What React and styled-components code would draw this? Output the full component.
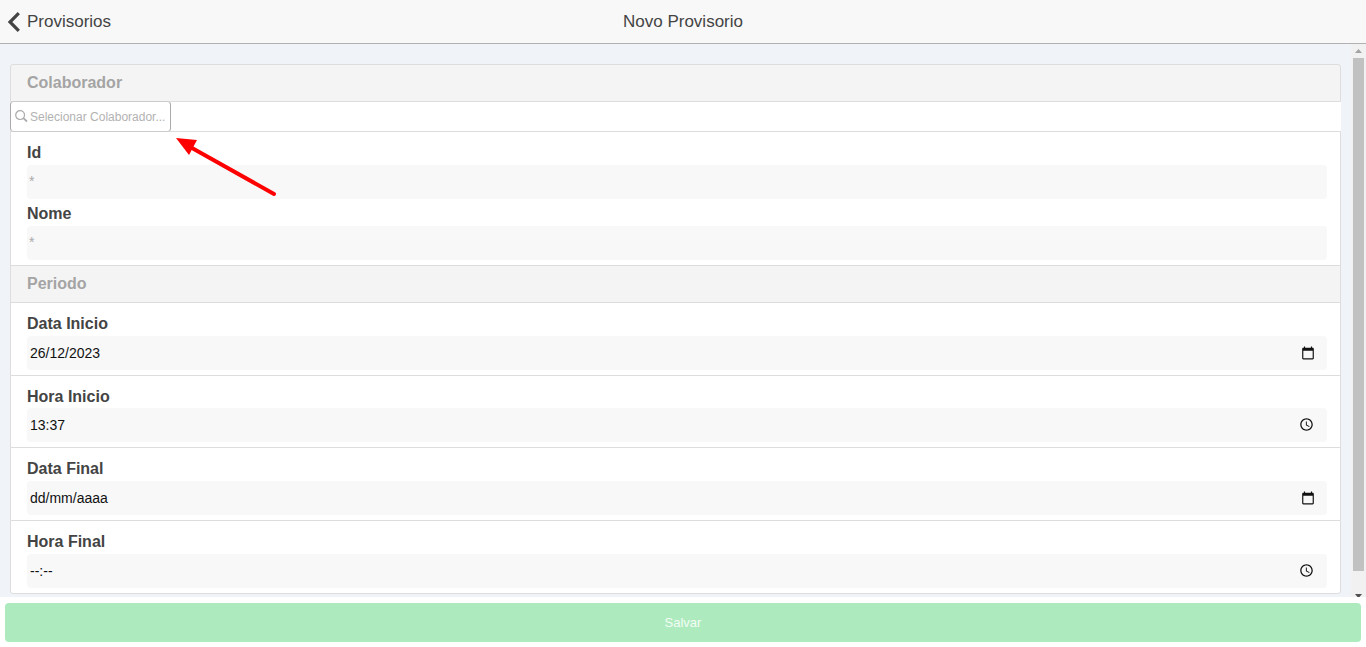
import React, { useState } from 'react';
import styled, { createGlobalStyle } from 'styled-components';

const GlobalStyle = createGlobalStyle`
  * {
    box-sizing: border-box;
  }

  body {
    margin: 0;
    color: #444;
    background-color: #fff;
    font-family: "Liberation Sans", Arial, sans-serif;
    font-size: 16px;
  }

  button,
  input {
    font-family: inherit;
  }
`;

const Page = styled.div`
  display: flex;
  flex-direction: column;
  height: 100vh;
`;

const Header = styled.header`
  display: grid;
  grid-template-columns: 1fr auto 1fr;
  align-items: center;
  flex: none;
  height: 44px;
  padding: 0 8px;
  background-color: #f8f8f8;
  border-bottom: 1px solid #b2b2b2;
`;

const BackLink = styled.a`
  display: flex;
  align-items: center;
  gap: 6px;
  color: #444;
  font-size: 17px;
  line-height: 20px;
  text-decoration: none;
`;

const Title = styled.h1`
  margin: 0;
  color: #444;
  font-size: 17px;
  font-weight: 400;
  line-height: 20px;
`;

const Body = styled.div`
  display: flex;
  flex: 1;
  min-height: 0;
  overflow: hidden;
  background-color: #f0f4f8;
`;

const Form = styled.form`
  flex: 1;
  padding: 20px 10px 0;
`;

const SectionTitle = styled.h2`
  margin: 0;
  padding: 8px 16px;
  color: #a4a4a4;
  background-color: #f4f4f4;
  border: 1px solid #ddd;
  border-radius: ${({ $first }) => ($first ? '3px 3px 0 0' : '0')};
  font-size: 16px;
  font-weight: 700;
  line-height: 20px;
`;

const PickerRow = styled.div`
  position: relative;
  display: flex;
  background-color: #fff;
`;

const PickerButton = styled.button`
  position: relative;
  display: flex;
  align-items: center;
  gap: 2px;
  height: 31px;
  margin: -1px 0;
  padding: 0 5px 0 4px;
  color: #b2b2b2;
  background-color: #fff;
  border: 1px solid;
  border-color: #ccc #aaa;
  border-radius: 4px;
  font-size: 12px;
`;

const Arrow = styled.svg`
  position: absolute;
  top: 32px;
  left: 164px;
  pointer-events: none;
`;

const Group = styled.div`
  padding: 11px 13px 5px 16px;
  background-color: #fff;
  border: 1px solid #ddd;
  border-bottom-width: ${({ $last }) => ($last ? '1px' : '0')};
  border-radius: ${({ $last }) => ($last ? '0 0 3px 3px' : '0')};

  h2 + & {
    border-top-width: 0;
  }
`;

const Field = styled.div`
  & + & {
    margin-top: 5px;
  }
`;

const Label = styled.label`
  display: block;
  height: ${({ $compact }) => ($compact ? '21px' : '22px')};
  color: #444;
  font-weight: 700;
  line-height: 20px;
`;

const InputBox = styled.div`
  display: flex;
  align-items: center;
  height: 34px;
  padding-right: ${({ $time }) => ($time ? '13px' : '12px')};
  background-color: #f8f8f8;
  border-radius: 4px;
`;

const Input = styled.input`
  flex: 1;
  min-width: 0;
  height: 34px;
  padding: 0 0 1px 3px;
  color: #111;
  background: transparent;
  border: 0;
  outline: 0;
  font-size: 14px;

  &::placeholder {
    color: #111;
    opacity: 1;
  }

  &:read-only {
    padding: 0 0 3px 2px;
  }

  &:read-only::placeholder {
    color: #aaa;
  }
`;

const IconButton = styled.button`
  display: flex;
  padding: 0 0 1px;
  color: #111;
  background: none;
  border: 0;
`;

const Scrollbar = styled.div`
  display: flex;
  flex-direction: column;
  align-items: center;
  flex: none;
  width: 15px;
  background-color: #f1f1f1;
`;

const ScrollArrow = styled.svg`
  flex: none;
  display: block;
`;

const Thumb = styled.div`
  flex: 1;
  width: 11px;
  margin-bottom: 23px;
  background-color: #c1c1c1;
`;

const Footer = styled.footer`
  flex: none;
  padding: 6px 5px 5px;
  background-color: #fff;
`;

const SaveButton = styled.button`
  display: block;
  width: 100%;
  height: 39px;
  padding: 0;
  color: #f3fcf5;
  background-color: #adebbe;
  border: 0;
  border-radius: 4px;
  font-size: 13px;
`;

const ChevronIcon = () => (
  <svg width="13" height="20" viewBox="0 0 13 20" fill="none" aria-hidden="true">
    <path d="M10.8 1.2 2 10l8.8 8.8" stroke="#444" strokeWidth="3.2" />
  </svg>
);

const SearchIcon = () => (
  <svg width="13" height="13" viewBox="0 0 13 13" fill="none" stroke="#aaa" aria-hidden="true">
    <circle cx="5.1" cy="5.1" r="4.4" strokeWidth="1.2" />
    <path d="m8.4 8.2 3.600 3.300" strokeWidth="1.7" />
  </svg>
);

const CalendarIcon = () => (
  <svg width="14" height="14" viewBox="0 0 24 24" fill="currentColor" aria-hidden="true">
    <path d="M20 3h-1V1h-2v2H7V1H5v2H4c-1.100 0-2 .9-2 2v16c0 1.100.9 2 2 2h16c1.100 0 2-.9 2-2V5c0-1.100-.9-2-2-2zm0 18H4V8h16v13z" />
  </svg>
);

const ClockIcon = () => (
  <svg width="15" height="15" viewBox="0 0 24 24" fill="currentColor" aria-hidden="true">
    <path d="M12 2C6.500 2 2 6.500 2 12s4.500 10 10 10 10-4.500 10-10S17.500 2 12 2zm0 18c-4.400 0-8-3.600-8-8s3.600-8 8-8 8 3.600 8 8-3.600 8-8 8zm.5-13H11v6l5.200 3.100.8-1.200-4.500-2.700V7z" />
  </svg>
);

const periodFields = [
  { id: 'dataInicio', label: 'Data Inicio', placeholder: 'dd/mm/aaaa' },
  { id: 'horaInicio', label: 'Hora Inicio', placeholder: '--:--', time: true, compact: true },
  { id: 'dataFinal', label: 'Data Final', placeholder: 'dd/mm/aaaa' },
  { id: 'horaFinal', label: 'Hora Final', placeholder: '--:--', time: true },
];

const App = () => {
  const [values, setValues] = useState({
    dataInicio: '26/12/2023',
    horaInicio: '13:37',
    dataFinal: '',
    horaFinal: '',
  });

  const handleChange = (e) => {
    setValues({ ...values, [e.target.id]: e.target.value });
  };

  return (
    <Page>
      <GlobalStyle />
      <Header>
        <BackLink href="#provisorios">
          <ChevronIcon />
          Provisorios
        </BackLink>
        <Title>Novo Provisorio</Title>
      </Header>
      <Body>
        <Form id="provisorio" onSubmit={(e) => e.preventDefault()}>
          <SectionTitle $first>Colaborador</SectionTitle>
          <PickerRow>
            <PickerButton type="button">
              <SearchIcon />
              Selecionar Colaborador...
            </PickerButton>
            <Arrow width="106" height="66" viewBox="0 0 106 66" aria-hidden="true">
              <path d="M18 14 100 60" stroke="#f00" strokeWidth="4" strokeLinecap="round" />
              <path d="M2 4 23 6 15 21z" fill="#f00" />
            </Arrow>
          </PickerRow>
          <Group>
            <Field>
              <Label htmlFor="id">Id</Label>
              <InputBox>
                <Input id="id" placeholder="*" readOnly />
              </InputBox>
            </Field>
            <Field>
              <Label htmlFor="nome">Nome</Label>
              <InputBox>
                <Input id="nome" placeholder="*" readOnly />
              </InputBox>
            </Field>
          </Group>
          <SectionTitle>Periodo</SectionTitle>
          {periodFields.map(({ id, label, placeholder, time, compact }, i) => (
            <Group key={id} $last={i === periodFields.length - 1}>
              <Label htmlFor={id} $compact={compact}>{label}</Label>
              <InputBox $time={time}>
                <Input id={id} value={values[id]} placeholder={placeholder} onChange={handleChange} />
                <IconButton type="button" aria-label={`Selecionar ${label}`}>
                  {time ? <ClockIcon /> : <CalendarIcon />}
                </IconButton>
              </InputBox>
            </Group>
          ))}
        </Form>
        <Scrollbar aria-hidden="true">
          <ScrollArrow width="15" height="14" viewBox="0 0 15 14">
            <path d="M4 9 7.500 5 11 9z" fill="#a3a3a3" />
          </ScrollArrow>
          <Thumb />
          <ScrollArrow width="15" height="3" viewBox="0 0 15 3">
            <path d="M4 0h7L8.500 3h-2z" fill="#505050" />
          </ScrollArrow>
        </Scrollbar>
      </Body>
      <Footer>
        <SaveButton type="submit" form="provisorio">Salvar</SaveButton>
      </Footer>
    </Page>
  );
};

export default App;
